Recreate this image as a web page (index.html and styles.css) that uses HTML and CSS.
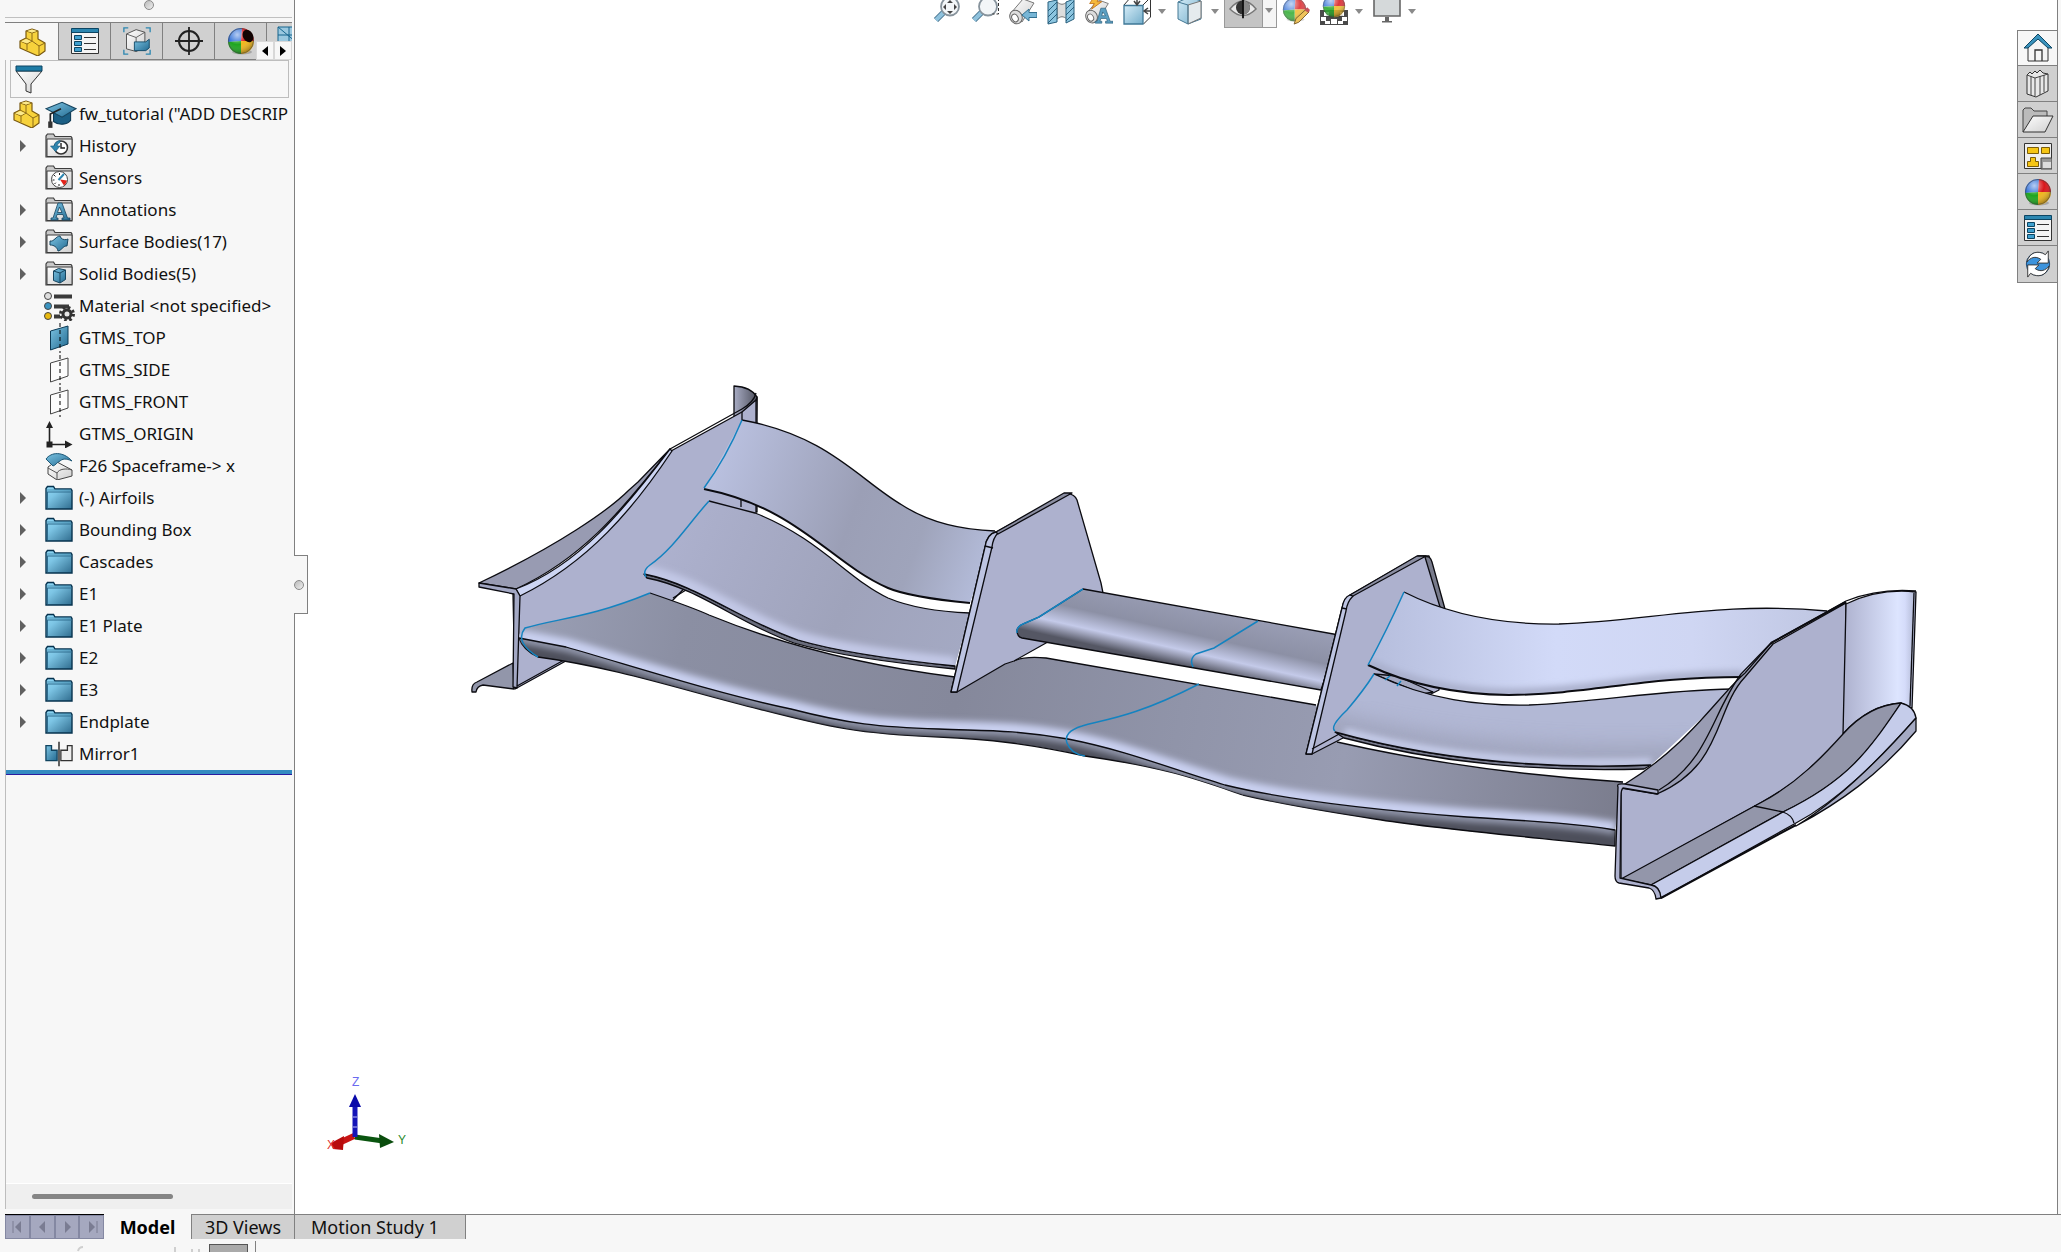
FILE: index.html
```html
<!DOCTYPE html>
<html lang="en">
<head>
<meta charset="utf-8">
<title>fw_tutorial</title>
<link rel="stylesheet" href="styles.css">
</head>
<body>
<svg class="defs" aria-hidden="true">
  <defs>
    <linearGradient id="gFolder" x1="0" y1="0" x2="1" y2="1"><stop offset="0" stop-color="#93dbf8"/><stop offset=".35" stop-color="#7cc4e4"/><stop offset="1" stop-color="#2f6c8e"/></linearGradient>
    <linearGradient id="gBlue" x1="0" y1="0" x2="1" y2="1"><stop offset="0" stop-color="#7cc3e2"/><stop offset="1" stop-color="#236b92"/></linearGradient>
    <linearGradient id="gGrey" x1="0" y1="0" x2="1" y2="1"><stop offset="0" stop-color="#fff"/><stop offset="1" stop-color="#cfcfcf"/></linearGradient>
    <linearGradient id="gLight" x1="0" y1="0" x2="1" y2="1"><stop offset="0" stop-color="#d6edf8"/><stop offset="1" stop-color="#74aecb"/></linearGradient>
    <radialGradient id="gGloss" cx=".35" cy=".25" r=".8"><stop offset="0" stop-color="#fff" stop-opacity=".65"/><stop offset=".5" stop-color="#fff" stop-opacity="0"/><stop offset="1" stop-color="#000" stop-opacity=".35"/></radialGradient>
    <symbol id="part" viewBox="0 0 28 28"><path d="M2 13l6-3V3l6-2 6 2v8l7 4v8l-7 5L2 20z" fill="#f7d23c" stroke="#7a5a12" stroke-width="1.200" stroke-linejoin="round"/><path d="M8 3l6 2 6-2M14 5v8l-6-3M14 13l-5 3-7-3M9 16v6M14 13l7 5 6-3M21 18v9" fill="none" stroke="#8b6a18"/><path d="M3 13.500l5-2.500 5 2.200-4 2zM9 3l5-1.500L19 3 14 4.500z" fill="#fbe98d"/></symbol>
    <symbol id="ball" viewBox="0 0 28 28"><ellipse cx="15" cy="25" rx="10" ry="2.500" fill="#000" opacity=".2"/><path d="M14 14L1 15A13 13 0 0 1 15 1z" fill="#2f6fd8"/><path d="M14 14L15 1A13 13 0 0 1 27 14z" fill="#d8171c"/><path d="M14 14L27 14A13 13 0 0 1 14 27z" fill="#efb61c"/><path d="M14 14L14 27A13 13 0 0 1 1 15z" fill="#1ea51f"/><circle cx="14" cy="14" r="12.500" fill="url(#gGloss)" stroke="#444" stroke-width=".6"/></symbol>
    <symbol id="fold" viewBox="0 0 28 28"><path d="M1 25V4.500L2.500 2.500h6L10 5h16l1 1.500V25z" fill="url(#gFolder)" stroke="#07334f" stroke-width="1.400"/><path d="M2 8h25M2.500 8v16" stroke="#2f6c8e" fill="none"/><path d="M2 6h24" stroke="#4a93b5"/></symbol>
    <symbol id="gfold" viewBox="0 0 28 28"><path d="M1 25V4l1.500-2h6L10 4.500h16L27 6v19z" fill="#c9c9c9" stroke="#3d3d3d" stroke-width="1.200"/><path d="M2 7h25v17.500H2z" fill="url(#gGrey)" stroke="#3d3d3d"/></symbol>
    <symbol id="history" viewBox="0 0 28 28"><use href="#gfold"/><circle cx="16" cy="15.500" r="6.500" fill="#fff" stroke="#333" stroke-width="1.600"/><path d="M16 11v5h4" stroke="#222" fill="none" stroke-width="1.400"/><path d="M15 8.500A7 7 0 0 0 9 14H5.500l5 5.500 4.500-5.500h-3a5 5 0 0 1 3-3.500z" fill="#2e86b0" stroke="#15567a" stroke-width=".6"/></symbol>
    <symbol id="sensor" viewBox="0 0 28 28"><use href="#gfold"/><circle cx="14.500" cy="15.500" r="8" fill="#fff" stroke="#444"/><path d="M14.500 9v2M9 11l1.500 1.500M7.500 16h2M9.500 20l1.300-1.300M14 22v-2" stroke="#222"/><path d="M15 15.500l7 1a7.500 7.500 0 0 1-3 5z" fill="#e2231a"/><path d="M13.500 16l5.500-6" stroke="#2e86b0" stroke-width="2"/></symbol>
    <symbol id="annot" viewBox="0 0 28 28"><use href="#gfold"/><path d="M13 7h4l5.500 15H25v2h-8v-2h2l-1-3.500h-6L11 22h2v2H6v-2h2zM14.500 11l-2 5.500h4.500z" fill="url(#gBlue)" stroke="#17455f" fill-rule="evenodd" stroke-width=".8"/></symbol>
    <symbol id="surf" viewBox="0 0 28 28"><use href="#gfold"/><path d="M5 13c4 1 6-5 10-5l1 2c2 2 5 2 7 1l-1 7c-3-1-6 5-9 5-1-4-4-6-8-6z" fill="url(#gBlue)" stroke="#17455f"/></symbol>
    <symbol id="solid" viewBox="0 0 28 28"><use href="#gfold"/><path d="M8.500 11l5-2.500 7 1.500v9.500L15 23l-6.500-2.500z" fill="url(#gBlue)" stroke="#17455f"/><path d="M8.500 11l6.500 2 5.500-3M15 13v10" fill="none" stroke="#17455f"/></symbol>
    <symbol id="material" viewBox="0 0 30 30"><g stroke="#444"><circle cx="4" cy="5" r="3.500" fill="#ddd"/><circle cx="4" cy="15" r="3.500" fill="#3a93c0"/><circle cx="4" cy="25" r="3.500" fill="#e8b90f"/></g><path d="M10 3.500h18v4H10zM10 13.500h15v4H10zM10 23.500h6v4h-6z" fill="#3a3a3a"/><circle cx="23" cy="23" r="6.500" stroke="#333" stroke-width="3" stroke-dasharray="2.600 2.500" fill="none"/><circle cx="23" cy="23" r="4" fill="#e8e8e8" stroke="#333" stroke-width="3"/></symbol>
    <symbol id="planeOn" viewBox="0 0 28 32"><path d="M5.500 9L23 4v18L5.500 28z" fill="url(#gBlue)" stroke="#0c3a55"/><path d="M15 1v30" stroke="#000" stroke-dasharray="4 3"/></symbol>
    <symbol id="plane" viewBox="0 0 28 32"><path d="M5.500 9L23 4v18L5.500 28z" fill="#fcfcfc" stroke="#444"/><path d="M15 1v30" stroke="#000" stroke-dasharray="4 3"/></symbol>
    <symbol id="origin" viewBox="0 0 28 28"><path d="M4.500 24V5M4 24.500h19" stroke="#222" stroke-width="1.600"/><path d="M1 8l3.500-7L8 8zM20 20.500l7.500 4-7.500 4zM1.500 21.500h6v6h-6z" fill="#222"/></symbol>
    <symbol id="ref" viewBox="0 0 28 28"><path d="M3 15c3-2 5-4 9-5l15 8v6l-15 4-9-6z" fill="url(#gGrey)" stroke="#444"/><path d="M3 16l9 5c2-4 9-5 15-3M12 21v7" stroke="#555" fill="none"/><path d="M1 7c5-7 17-8 26 2-6-3-10-2-12 0-4 2-4 4-7 5z" fill="url(#gBlue)" stroke="#1c5675"/></symbol>
    <symbol id="mirror" viewBox="0 0 30 28"><path d="M1 5h6v5h6v11H1z" fill="url(#gBlue)" stroke="#10435f" stroke-width="1.400"/><path d="M29 5h-5v5h-7v11h12z" fill="#eee" stroke="#333" stroke-width="1.400"/><path d="M15 1v26" stroke="#000" stroke-width="1.300"/></symbol>
    <symbol id="hat" viewBox="0 0 30 26"><path d="M8 12v8c5 4 13 3 16-1v-8z" fill="#1b5f85" stroke="#0d3a55"/><path d="M1 8l15-6 13 6-13 8z" fill="url(#gBlue)" stroke="#17455f"/><path d="M15 8L5 13v8" fill="none" stroke="#222" stroke-width="1.600"/><path d="M3 20h4v6H3z" fill="#333"/></symbol>
    <symbol id="funnel" viewBox="0 0 28 30"><path d="M1 7l10 13v7l5 2V20L27 7z" fill="url(#gGrey)" stroke="#333"/><path d="M1 2h26v5H1z" fill="#1e7ca6" stroke="#0d4562"/></symbol>
    <symbol id="props" viewBox="0 0 28 28"><path d="M.500 2.500h27v24H.500z" fill="#f4f4f4" stroke="#333"/><path d="M.500 1.500h27v4H.500z" fill="#2b86b0" stroke="#0d4562"/><path d="M3.500 8.500h7v4h-7zM3.500 14.500h7v4h-7zM3.500 20.500h7v4h-7z" fill="#3fa0cf" stroke="#0d4562"/><path d="M13 10.500h12M13 16.500h12M13 22.500h12" stroke="#333"/></symbol>
    <symbol id="config" viewBox="0 0 32 32"><path d="M1 6V1h5M26 1h5v5M31 26v5h-5M6 31H1v-5" fill="none" stroke="#2b86b0" stroke-width="1.500"/><path d="M4 8l11-5 10 3v17l-10 5-11-3z" fill="url(#gGrey)" stroke="#444"/><path d="M4 8l11 4 10-6M15 12v16" fill="none" stroke="#555"/><path d="M13 17h13l4-3v10l-4 3H13z" fill="url(#gBlue)" stroke="#0d4562"/></symbol>
    <symbol id="target" viewBox="0 0 28 28"><circle cx="14" cy="14" r="10" fill="none" stroke="#222" stroke-width="2"/><path d="M14 0v28M0 14h28" stroke="#222" stroke-width="1.800"/></symbol>
    <symbol id="ballHole" viewBox="0 0 28 28"><use href="#ball"/><ellipse cx="21" cy="9" rx="5" ry="6.500" transform="rotate(-30 21 9)" fill="#120404"/></symbol>
    <symbol id="fitGlass" viewBox="0 0 28 28"><path d="M11 15l-8 8" stroke="#426f8b" stroke-width="6"/><path d="M11 15l-8 8" stroke="#8fc2dd" stroke-width="4"/><circle cx="17" cy="9.500" r="9" fill="#f3f6f8" stroke="#87939c" stroke-width="1.800"/></symbol>
    <symbol id="zoomfit" viewBox="0 0 28 28"><use href="#fitGlass"/><path d="M17 3l3 3h-6zM17 17l3-3h-6zM10 10l3-3v6zM24 10l-3-3v6z" fill="#444"/></symbol>
    <symbol id="zoomarea" viewBox="0 0 28 28"><use href="#fitGlass"/><path d="M27.500 1v16h-6" fill="none" stroke="#333" stroke-dasharray="3 2"/></symbol>
    <symbol id="scope" viewBox="0 0 28 28"><path d="M2 16L14 2l11 4L13 25z" fill="url(#gGrey)" stroke="#777"/><ellipse cx="7" cy="20" rx="6" ry="7" transform="rotate(-30 7 20)" fill="#ddd" stroke="#666"/><ellipse cx="6" cy="21" rx="3" ry="4" transform="rotate(-30 6 21)" fill="#fff" stroke="#666"/></symbol>
    <symbol id="prev" viewBox="0 0 28 28"><use href="#scope"/><path d="M13 18l7-6v3.500h8v5h-8V24z" fill="#78b6d6" stroke="#34708f"/></symbol>
    <symbol id="section" viewBox="0 0 28 28"><path d="M10 5c4 3 6 3 10 0v17c-4-3-6-3-10 0z" fill="#ddd" stroke="#777"/><path d="M1 5l9-2v22l-9 2zM19 5l8-3v20l-8 4z" fill="#8cc5e0" stroke="#285f7d"/><path d="M1 14l9-9M1 20l9-9M1 26l9-9M19 12l8-8M19 18l8-8M19 24l8-8" stroke="#285f7d"/></symbol>
    <symbol id="anim" viewBox="0 0 30 28"><use href="#scope" width="28" height="28"/><path d="M9 0h6l-2 4h5L7 12l3-6H5z" fill="#f5b83b" stroke="#c27622"/><path d="M17 11h5l5 14h3v2h-8v-2h2l-1-3h-6l-1 3h2v2h-7v-2h2zM19 15l-1 4h4z" fill="#5b9fc2" stroke="#2b5d79" fill-rule="evenodd" stroke-width=".7"/></symbol>
    <symbol id="orient" viewBox="0 0 28 28"><path d="M20 8l7-7M1 8l7-8M27.500 0v20l-7 7" fill="none" stroke="#333"/><path d="M1 8.500h19v18.500H1z" fill="url(#gLight)" stroke="#3f7897" stroke-width="1.300"/><path d="M14 2v6M11 4l3 4 3-4M28 14h-6M25 11l-4 3 4 3" fill="none" stroke="#444" stroke-width="1.500"/></symbol>
    <symbol id="display" viewBox="0 0 28 28"><path d="M2 5l12-5 11 4v18l-13 5-10-5z" fill="url(#gLight)" stroke="#447894"/><path d="M12 8l13-4v17l-13 6z" fill="#e5ebee" stroke="#777"/><path d="M2 5l10 3v19" fill="none" stroke="#447894"/></symbol>
    <symbol id="eye" viewBox="0 0 30 28"><path d="M1 15Q15-2 29 15Q15 29 1 15z" fill="#e9e9e9" stroke="#777" stroke-width="1.500"/><circle cx="15" cy="13.500" r="7.500" fill="#333"/><path d="M15 6a7.500 7.500 0 0 1 0 15z" fill="#888"/><path d="M15 2v23" stroke="#111" stroke-width="2"/></symbol>
    <symbol id="appear" viewBox="0 0 30 30"><use href="#ball" width="27" height="27" opacity=".8"/><path d="M13 29l2-6 11-10 3 3-11 11z" fill="#eec35b" stroke="#785c28"/><path d="M24 14l3-3 3 3-2 3z" fill="#c5535b"/></symbol>
    <symbol id="scene" viewBox="0 0 28 28"><path d="M0 13h28v15H0z" fill="#4a4a4a"/><path d="M4 15h5v4H4zM20 15h4v4h-4zM1 20h5v4H1zM11 22h6v5h-6zM22 20h5v4h-5zM5 24h5v3H5zM18 24h5v3h-5z" fill="#fff"/><use href="#ball" x="2" y="-3" width="24" height="24" opacity=".85"/></symbol>
    <symbol id="screen" viewBox="0 0 28 28"><path d="M1 1h26v18H1z" fill="#d5d9da" stroke="#666" stroke-width="1.600"/><path d="M12 20h4v4h3v1.500H9V24h3z" fill="#666"/></symbol>
    <symbol id="home" viewBox="0 0 28 28"><path d="M4 13L14 4l10 9v14H4z" fill="#f5f5f5" stroke="#333"/><path d="M11 27V16h7v11" fill="none" stroke="#333" stroke-width="1.300"/><path d="M0 14L14 0l14 14h-4L14 5 4 14z" fill="#3a93bd" stroke="#0d4562"/></symbol>
    <symbol id="books" viewBox="0 0 28 28"><path d="M3 5l3-3 2 2 3-3 2 2 3-3 3 3 5 1v17l-12 6-9-3z" fill="#e8e8e8" stroke="#333"/><path d="M3 5l8 3 13-4M11 8v18M16 6v19M20 5v17M7 6v19" fill="none" stroke="#444"/></symbol>
    <symbol id="open" viewBox="0 0 32 28"><path d="M1 26V4l2-2h6l3 3h13v6" fill="#bbb" stroke="#444"/><path d="M1 26L11 10h20l-8 16z" fill="url(#gGrey)" stroke="#333"/></symbol>
    <symbol id="palette" viewBox="0 0 28 28"><path d="M.500 1.500h27v25H.500z" fill="#eee" stroke="#333"/><path d="M3.500 5.500h11v6h-11zM17.500 5.500h8v6h-8zM6.500 15.500h5v4h3v5h-11v-5h3z" fill="#f5c514" stroke="#7b5d08"/><path d="M17 16h11v11H17z" fill="#999" stroke="#444"/><path d="M19 20h8v6h-8z" fill="#ddd"/></symbol>
    <symbol id="refresh" viewBox="0 0 28 30"><circle cx="14" cy="15" r="12.500" fill="#3c93dc" stroke="#1c4672"/><path d="M2 13C5 2 14 0 22 5l3-4v13H13l4-4C11 6 6 8 2 13zM26 17C23 28 14 30 6 25l-3 4V16h12l-4 4c6 4 11 2 15-3z" fill="#fff" stroke="#333"/></symbol>
  </defs>
</svg>

<main class="workspace">
  <aside class="panel">
    <div class="grip"><span class="dot"></span></div>
    <nav class="ptabs">
      <button class="ptab on" aria-label="Feature tree"><svg><use href="#part"/></svg></button>
      <button class="ptab" aria-label="Properties"><svg><use href="#props"/></svg></button>
      <button class="ptab" aria-label="Configurations"><svg class="wide"><use href="#config"/></svg></button>
      <button class="ptab" aria-label="Dimensions"><svg><use href="#target"/></svg></button>
      <button class="ptab" aria-label="Appearances"><svg><use href="#ballHole"/></svg></button>
      <button class="ptab last" aria-label="CAM"><svg class="cam" viewBox="0 0 18 18"><path d="M1 1h20v15H1zM1 1l18 15M12 1v14M1 9h16" fill="#9bc8df" stroke="#17658d"/></svg></button>
      <div class="scroller"><button aria-label="Previous tabs"><svg viewBox="0 0 6 10"><path d="M6 0v10L0 5z"/></svg></button><button aria-label="More tabs"><svg viewBox="0 0 6 10"><path d="M0 0v10l6-5z"/></svg></button></div>
    </nav>
    <div class="body">
      <label class="filter"><svg><use href="#funnel"/></svg><input type="text" aria-label="Filter tree"></label>
      <ul class="tree">
        <li class="root"><svg><use href="#part"/></svg><svg class="wide"><use href="#hat"/></svg><span>fw_tutorial ("ADD DESCRIP</span></li>
        <li><i class="tw"></i><svg><use href="#history"/></svg><span>History</span></li>
        <li><i></i><svg><use href="#sensor"/></svg><span>Sensors</span></li>
        <li><i class="tw"></i><svg><use href="#annot"/></svg><span>Annotations</span></li>
        <li><i class="tw"></i><svg><use href="#surf"/></svg><span>Surface Bodies(17)</span></li>
        <li><i class="tw"></i><svg><use href="#solid"/></svg><span>Solid Bodies(5)</span></li>
        <li><i></i><svg class="mat"><use href="#material"/></svg><span>Material &lt;not specified&gt;</span></li>
        <li><i></i><svg class="tall"><use href="#planeOn"/></svg><span>GTMS_TOP</span></li>
        <li><i></i><svg class="tall"><use href="#plane"/></svg><span>GTMS_SIDE</span></li>
        <li><i></i><svg class="tall"><use href="#plane"/></svg><span>GTMS_FRONT</span></li>
        <li><i></i><svg><use href="#origin"/></svg><span>GTMS_ORIGIN</span></li>
        <li><i></i><svg><use href="#ref"/></svg><span>F26 Spaceframe-&gt; x</span></li>
        <li><i class="tw"></i><svg><use href="#fold"/></svg><span>(-) Airfoils</span></li>
        <li><i class="tw"></i><svg><use href="#fold"/></svg><span>Bounding Box</span></li>
        <li><i class="tw"></i><svg><use href="#fold"/></svg><span>Cascades</span></li>
        <li><i class="tw"></i><svg><use href="#fold"/></svg><span>E1</span></li>
        <li><i class="tw"></i><svg><use href="#fold"/></svg><span>E1 Plate</span></li>
        <li><i class="tw"></i><svg><use href="#fold"/></svg><span>E2</span></li>
        <li><i class="tw"></i><svg><use href="#fold"/></svg><span>E3</span></li>
        <li><i class="tw"></i><svg><use href="#fold"/></svg><span>Endplate</span></li>
        <li><i></i><svg><use href="#mirror"/></svg><span>Mirror1</span></li>
      </ul>
      <div class="rollback"></div>
      <div class="hscroll"><div class="thumb"></div></div>
    </div>
    <button class="splitter" aria-label="Collapse panel"><span class="dot"></span></button>
  </aside>

  <section class="view">
    <div class="hud">
      <button aria-label="Zoom to fit"><svg><use href="#zoomfit"/></svg></button>
      <button aria-label="Zoom to area"><svg><use href="#zoomarea"/></svg></button>
      <button aria-label="Previous view"><svg><use href="#prev"/></svg></button>
      <button aria-label="Section view"><svg><use href="#section"/></svg></button>
      <button aria-label="Dynamic annotation views"><svg><use href="#anim"/></svg></button>
      <button class="drop" aria-label="View orientation"><svg><use href="#orient"/></svg><i class="caret"></i></button>
      <button class="drop" aria-label="Display style"><svg><use href="#display"/></svg><i class="caret"></i></button>
      <button class="eye" aria-label="Hide or show items"><svg><use href="#eye"/></svg><span><i class="caret"></i></span></button>
      <button aria-label="Edit appearance"><svg><use href="#appear"/></svg></button>
      <button class="drop" aria-label="Apply scene"><svg><use href="#scene"/></svg><i class="caret"></i></button>
      <button class="drop" aria-label="View settings"><svg><use href="#screen"/></svg><i class="caret"></i></button>
    </div>

    <svg class="model" viewBox="296 0 1762 1214" role="img" aria-label="Front wing model">
      <defs>
        <filter id="soft" x="-20%" y="-50%" width="140%" height="200%"><feGaussianBlur stdDeviation="10"/></filter>
        <filter id="soft2" x="-20%" y="-20%" width="140%" height="140%"><feGaussianBlur stdDeviation="3"/></filter>
        <linearGradient id="w3l" gradientUnits="userSpaceOnUse" x1="720" y1="460" x2="990" y2="560"><stop offset="0" stop-color="#b9c0df"/><stop offset=".5" stop-color="#9b9fb6"/><stop offset=".75" stop-color="#9fa4bb"/><stop offset="1" stop-color="#b4bcda"/></linearGradient>
        <linearGradient id="w2l" gradientUnits="userSpaceOnUse" x1="670" y1="530" x2="960" y2="660"><stop offset="0" stop-color="#adb1ce"/><stop offset=".6" stop-color="#9fa3bb"/><stop offset="1" stop-color="#a4a9c3"/></linearGradient>
        <linearGradient id="w1" gradientUnits="userSpaceOnUse" x1="520" y1="600" x2="1620" y2="810"><stop offset="0" stop-color="#9ba0b6"/><stop offset=".15" stop-color="#8b8fa3"/><stop offset=".4" stop-color="#85889b"/><stop offset=".6" stop-color="#9094a9"/><stop offset=".75" stop-color="#989cb2"/><stop offset="1" stop-color="#7b7d8e"/></linearGradient>
        <linearGradient id="w3r" gradientUnits="userSpaceOnUse" x1="1375" y1="640" x2="1830" y2="640"><stop offset="0" stop-color="#b6bedd"/><stop offset=".4" stop-color="#d2daf8"/><stop offset=".7" stop-color="#cfd6f3"/><stop offset="1" stop-color="#bfc6e2"/></linearGradient>
        <linearGradient id="mid" gradientUnits="userSpaceOnUse" x1="1195" y1="607" x2="1182" y2="665"><stop offset="0" stop-color="#989cb3"/><stop offset=".45" stop-color="#8c90a5"/><stop offset=".75" stop-color="#c4cae9"/><stop offset=".85" stop-color="#9a9eb5"/><stop offset="1" stop-color="#555764"/></linearGradient>
        <linearGradient id="tailr" x1="0" x2="1"><stop offset="0" stop-color="#adb1ce"/><stop offset=".75" stop-color="#dde5ff"/><stop offset=".85" stop-color="#d5dcfa"/><stop offset="1" stop-color="#aeb5d0"/></linearGradient>
        <linearGradient id="taill" x1="0" x2="1"><stop offset="0" stop-color="#a8acc4"/><stop offset="1" stop-color="#50525f"/></linearGradient>
        <path id="lead" d="M520 638L567 647C640 668 720 694 792 709C850 724 880 727 940 729C980 731 1011 729 1069 739C1130 751 1172 769 1226 785C1279 798 1350 808 1468 817C1550 822 1580 824 1616 830"/>
        <path id="under" d="M520 638L567 647C640 668 720 694 792 709C850 724 880 727 940 729C980 731 1011 729 1069 739C1130 751 1172 769 1226 785C1279 798 1350 808 1468 817C1550 822 1580 824 1616 830V846C1500 834 1430 828 1376 819Q1290 806 1244 795C1200 780 1170 768 1086 756C1030 744 990 739 940 737C860 734 830 727 760 709C690 692 620 668 539 657Q524 650 520 638Z"/>
        <clipPath id="cu"><use href="#under"/></clipPath>
        <clipPath id="c1"><path d="M651 593Q695 608 710 615Q820 660 956 677L1015 661Q1025 656 1047 658L1317 705L1338 742Q1470 772 1624 782L1616 830C1580 824 1550 822 1468 817C1350 808 1279 798 1226 785C1172 769 1130 751 1069 739C1011 729 980 731 940 729C880 727 850 724 792 709C720 694 640 668 567 647L520 638Q520 631 526 628C560 618 590 618 651 593Z"/></clipPath>
        <clipPath id="c3r"><path d="M1405 592Q1470 625 1560 624C1650 621 1720 601 1828 611L1772 643L1744 677C1640 677 1595 694 1510 695Q1430 694 1369 665Q1388 630 1405 592Z"/></clipPath>
        <clipPath id="c2r"><path d="M1375 674C1430 700 1480 706 1530 705C1600 702 1660 690 1734 689L1652 765Q1480 772 1336 732Q1332 728 1348 710Q1365 690 1375 674Z"/></clipPath>
        <clipPath id="c2l"><path d="M710 501L756 513C820 538 850 580 889 598Q920 611 971 613L956 666Q850 655 799 640C740 620 700 585 645 574Q643 570 651 565C675 548 690 523 710 501Z"/></clipPath>
      </defs>

      <g class="ink">
        <path d="M735 386Q752 387 758 397L757 440L735 425Z" fill="url(#taill)"/>
        <path d="M758 397V512L743 505V412Q757 405 758 397Z" fill="#9a9eb6"/>
        <path d="M480 583C560 545 610 510 630 490L639 482L671 449C620 515 580 560 517 589L480 583Z" fill="#989bb2"/>
        <path d="M514 663L478 682Q472 684 473 692H477Q478 686 484 685L515 689Z" fill="#9296aa"/>
        <path d="M519 594C590 560 630 505 672 451L743 412L757 400V515L674 600L565 662L516 689L514 594Z" fill="#adb1ce"/>
        <path d="M517 589C580 565 625 510 671 449L673 451C635 508 590 562 521 596Z" fill="#cdd5f3"/>
        <path d="M480 583L517 589L521 596L518 688L514 687L515 594L480 587Z" fill="#a3a8c4"/>
        <path d="M671 449L743 409Q755 402 757 393" fill="none"/>
        <path d="M518 686L565 660M674 598L687 590M742 500V507" fill="none"/>
      </g>

      <g class="ink">
        <use href="#under" fill="#4d4f5b"/>
        <g clip-path="url(#cu)"><use href="#lead" fill="none" stroke="#9297ac" stroke-width="10" filter="url(#soft2)"/></g>
        <g clip-path="url(#c1)">
          <path d="M500 580H1640V850H500Z" fill="url(#w1)" stroke="none"/>
          <use href="#lead" fill="none" stroke="#c9d0f0" stroke-width="17" filter="url(#soft2)"/>
        </g>
        <use href="#lead" fill="none"/>
        <path d="M651 593Q695 608 710 615Q820 660 956 677M1015 661Q1025 656 1047 658L1317 705M1338 742Q1470 772 1624 782" fill="none"/>
      </g>

      <g class="ink">
        <path d="M645 574C700 585 740 620 799 640Q850 655 956 666V669Q850 659 795 643C740 624 700 588 648 578Z" fill="#696c7c"/>
        <g clip-path="url(#c2l)"><path d="M640 495H980V675H640Z" fill="url(#w2l)" stroke="none"/><path d="M645 572C700 583 740 618 799 638Q850 653 956 664" fill="none" stroke="#c2c8e6" stroke-width="14" filter="url(#soft2)"/></g>
        <path d="M710 501L756 513C820 538 850 580 889 598Q920 611 971 613M645 574C700 585 740 620 799 640Q850 655 956 666" fill="none"/>
        <path d="M743 420C830 436 860 480 903 505Q940 529 996 531L971 603Q910 597 889 588C830 562 800 508 705 489Z" fill="url(#w3l)" stroke="none"/>
        <path d="M743 420C830 436 860 480 903 505Q940 529 996 531M743 420V412" fill="none"/>
        <path class="bold" d="M971 603Q910 597 889 588C830 562 800 508 705 489" fill="none"/>
      </g>

      <g class="ink">
        <path d="M997 532L1067 494Q1075 493 1078 500L1102 583L1104 593V620L1047 643L1015 661L1006 664L958 692H952L986 547Q988 534 997 532Z" fill="#adb1ce"/>
        <path d="M952 692L986 547Q988 534 997 532L999 533Q994 538 993 547L958 692Z" fill="#bdc4e2"/>
        <path d="M997 532L1065 493H1073L999 534Z" fill="#8b8ea2"/>
        <path d="M986 546L994 548" fill="none"/>
        <path d="M1084 589L1340 635L1322 690L1023 638Q1018 637 1018 630Q1019 626 1024 624L1040 617Z" fill="url(#mid)"/>
      </g>

      <g class="ink">
        <path d="M1351 595L1419 556L1430 556L1445 608L1440 690L1344 738L1313 754H1307L1343 608Q1345 597 1351 595Z" fill="#adb1ce"/>
        <path d="M1307 754L1343 608Q1345 597 1351 595L1354 596Q1348 602 1347 611L1313 754Z" fill="#bdc4e2"/>
        <path d="M1351 595L1418 556H1427L1354 596Z" fill="#8b8ea2"/>
        <path d="M1426 557Q1431 555 1433 562L1446 609L1441 607Z" fill="#787b8c"/>
        <path d="M1343 608L1348 609M1313 749L1342 733" fill="none"/>
        <path d="M1375 674L1398 676L1434 692L1424 694Z" fill="#a4a8c1"/>
      </g>

      <g class="ink">
        <path d="M1336 732Q1480 772 1652 765L1645 769Q1480 774 1345 738Z" fill="#777a8c"/>
        <g clip-path="url(#c2r)"><path d="M1330 670H1740V775H1330Z" fill="#b2b8d5" stroke="none"/><path d="M1300 722Q1480 772 1700 762" fill="none" stroke="#9599af" stroke-width="36" opacity=".6" filter="url(#soft)"/><path d="M1346 732Q1480 768 1652 762" fill="none" stroke="#cad1ef" stroke-width="7" filter="url(#soft2)"/></g>
        <path d="M1375 674C1430 700 1480 706 1530 705C1600 702 1660 690 1734 689M1336 732Q1480 772 1652 765" fill="none"/>
        <g clip-path="url(#c3r)"><path d="M1360 585H1840V700H1360Z" fill="url(#w3r)" stroke="none"/><path d="M1744 675C1640 675 1595 692 1510 693Q1430 692 1369 663" fill="none" stroke="#a9afcb" stroke-width="9" filter="url(#soft2)"/></g>
        <path d="M1405 592Q1470 625 1560 624C1650 621 1720 601 1828 611" fill="none"/>
        <path class="bold" d="M1744 677C1640 677 1595 694 1510 695Q1430 694 1369 665" fill="none"/>
      </g>

      <g class="ink">
        <path d="M1626 784C1690 745 1720 695 1746 673L1772 643L1776 646C1735 700 1730 760 1660 794Z" fill="#999cb3"/>
        <path d="M1774 644L1847 603V735L1814 765Q1795 785 1763 802L1622 880V788L1658 794C1725 765 1715 710 1746 677Z" fill="#adb1ce"/>
        <path d="M1847 604Q1880 588 1917 592L1913 708L1902 703Q1870 705 1844 734Z" fill="url(#tailr)"/>
        <path d="M1915 593L1911 706" fill="none"/>
        <path d="M1622 879L1763 802C1800 782 1825 755 1844 734Q1870 705 1902 703C1870 755 1840 785 1784 812L1652 885Z" fill="#9396aa"/>
        <path d="M1784 812C1850 780 1870 750 1902 703Q1915 706 1917 718C1880 760 1840 800 1797 823L1662 898Q1660 886 1652 885Z" fill="#c5ccea"/>
        <path d="M1917 718V731C1880 775 1840 803 1797 826C1840 800 1880 760 1917 718Z" fill="#a5aac3"/>
        <path d="M1755 806L1784 812Q1793 815 1795 823" fill="none"/>
        <path d="M1619 787Q1617 783 1626 784L1659 790V794L1624 788Q1622 790 1622 796L1621 878L1652 885Q1661 886 1662 898L1657 899Q1656 890 1650 888L1620 883Q1616 882 1616 876Z" fill="#adb1ce"/>
        <path d="M1660 790C1710 760 1712 715 1742 674L1772 643L1847 601Q1880 588 1917 591" fill="none"/>
        <path class="bold" d="M1772 643L1847 602M1662 898L1797 825" fill="none"/>
      </g>

      <g class="edge">
        <path d="M743 420Q727 458 705 488M710 501C690 523 675 548 651 565Q643 571 647 577M651 593C590 618 560 618 526 628Q515 642 539 657"/>
        <path d="M1200 684C1130 720 1100 720 1083 726Q1064 732 1068 743Q1072 754 1086 756M1084 589L1040 617L1024 624Q1017 627 1018 633M1259 621L1215 648L1197 654Q1190 659 1194 667"/>
        <path d="M1405 592Q1388 630 1369 665M1375 674Q1365 690 1348 710Q1330 727 1336 731M1386 680L1391 676M1398 686L1402 681"/>
      </g>

      <g class="triad">
        <path d="M355 1136L340 1143" stroke="#c81414" stroke-width="6"/><path d="M345 1136l-13 7 2 6 10 1z" fill="#b80c0c"/>
        <path d="M356 1137l28 4" stroke="#0a550f" stroke-width="5"/><path d="M380 1134l15 8-14 6z" fill="#0a4d0d"/>
        <path d="M356 1137v-34" stroke="#1414b8" stroke-width="5"/><path d="M350 1107l6-13 6 13z" fill="#0909aa"/><path d="M354 1117h4M354 1127h4" stroke="#b9b9f5"/>
        <text x="353" y="1086" fill="#6a6af0">Z</text><text x="399" y="1144" fill="#2a8a2a">Y</text><text x="328" y="1149" fill="#e03030">X</text>
      </g>
    </svg>

    <nav class="taskpane">
      <button class="on" aria-label="Home"><svg><use href="#home"/></svg></button>
      <button aria-label="Design library"><svg><use href="#books"/></svg></button>
      <button aria-label="File explorer"><svg class="wide"><use href="#open"/></svg></button>
      <button aria-label="View palette"><svg><use href="#palette"/></svg></button>
      <button aria-label="Appearances"><svg><use href="#ball"/></svg></button>
      <button aria-label="Custom properties"><svg><use href="#props"/></svg></button>
      <button aria-label="Updates"><svg><use href="#refresh"/></svg></button>
    </nav>
  </section>
</main>

<footer class="foot">
  <div class="sheets">
    <div class="nav">
      <button aria-label="First"><svg viewBox="0 0 12 14"><path d="M2 1v12" /><path class="f" d="M10 1v12L4 7z"/></svg></button>
      <button aria-label="Previous"><svg viewBox="0 0 12 14"><path class="f" d="M9 1v12L3 7z"/></svg></button>
      <button aria-label="Next"><svg viewBox="0 0 12 14"><path class="f" d="M4 1v12l6-6z"/></svg></button>
      <button aria-label="Last"><svg viewBox="0 0 12 14"><path d="M11 1v12"/><path class="f" d="M3 1v12l6-6z"/></svg></button>
    </div>
    <button class="sheet on">Model</button>
    <button class="sheet views">3D Views</button>
    <button class="sheet motion">Motion Study 1</button>
    <div class="rule"></div>
  </div>
  <div class="status"><svg class="marks" viewBox="0 0 140 13"><path d="M11 12q1-4 5-4M108 8v5M125 10v3M132 10v3" fill="none" stroke="#cfcfcf" stroke-width="2"/></svg><div class="chip"></div><div class="bar"></div></div>
</footer>
</body>
</html>
```

FILE: styles.css
```css
* { box-sizing: border-box; }
body { margin: 0; height: 100vh; display: flex; flex-direction: column; overflow: hidden; background: #f7f7f7; color: #111; font: 18px/32px "Noto Sans", "Open Sans", sans-serif; }
button { margin: 0; padding: 0; border: 0; background: none; font: inherit; color: inherit; }
svg { display: block; width: 28px; height: 28px; flex: none; }
svg.wide { width: 32px; }
svg.defs { position: absolute; width: 0; height: 0; }
.workspace { flex: 1; min-height: 0; display: flex; }

.panel { position: relative; flex: none; width: 295px; padding: 0 2px 0 5px; border-right: 1px solid #808080; display: flex; flex-direction: column; }
.grip { height: 18px; border-bottom: 1px solid #c0c0c0; display: flex; justify-content: center; }
.dot { width: 10px; height: 10px; border-radius: 50%; border: 1px solid #8a8a8a; background: linear-gradient(135deg, #bbb, #eee); }
.ptabs { position: relative; height: 38px; margin-top: 4px; border-top: 1px solid #808080; display: flex; overflow: hidden; }
.ptab { flex: none; width: 52px; height: 37px; border-right: 1px solid #808080; border-bottom: 1px solid #808080; background: #d0d0d0; display: flex; align-items: center; justify-content: center; }
.ptab.on { width: 54px; background: #f7f7f7; border-bottom: 0; }
.ptab.last { border-right: 0; align-items: flex-start; justify-content: flex-start; width: 40px; padding: 3px 0 0 10px; }
.ptab .cam { width: 18px; height: 18px; }
.scroller { position: absolute; right: 0; bottom: 0; display: flex; background: #f7f7f7; }
.scroller button { width: 18px; height: 19px; border: 1px solid #d8d8d8; display: flex; align-items: center; justify-content: center; }
.scroller svg { width: 6px; height: 10px; }
.body { flex: 1; min-height: 0; border-left: 1px solid #bdbdbd; margin-bottom: 5px; display: flex; flex-direction: column; }
.filter { flex: none; height: 38px; margin: 0 3px 0 4px; border: 1px solid #bdbdbd; display: flex; align-items: center; padding-left: 4px; }
.filter svg { height: 30px; }
.filter input { flex: 1; min-width: 0; border: 0; background: none; outline: 0; font: inherit; }
.tree { list-style: none; margin: 0; padding: 0 0 0 6px; flex: none; font-size: 17px; }
.tree li { display: grid; grid-template-columns: 33px 28px 1fr; height: 32px; align-items: center; white-space: nowrap; }
.tree span { padding-left: 6px; }
.tree .tall { height: 32px; }
.tree .mat { width: 32px; height: 30px; margin-left: -2px; }
.tw { width: 0; height: 0; margin-left: 8px; border: 6px solid transparent; border-left-color: #606060; border-right: 0; }
.rollback { height: 5px; flex: none; background: #348bc1; border-bottom: 1px solid #2a1ca0; }
.hscroll { margin-top: auto; height: 26px; border-top: 1px solid #fff; background: #efefef; padding: 10px 0 0 26px; }
.thumb { width: 141px; height: 5px; border-radius: 3px; background: #858585; }
.splitter { position: absolute; left: 294px; top: 555px; width: 14px; height: 59px; border: 1px solid #808080; border-left: 0; background: #f7f7f7; display: flex; align-items: center; z-index: 1; }

.view { position: relative; flex: 1; min-width: 0; background: #fff; border-right: 1px solid #808080; margin-right: 3px; }
.model { width: 100%; height: 100%; }
.ink { stroke: #0b0b10; stroke-width: 1.300; stroke-linejoin: round; }
.bold { stroke-width: 2; }
.edge { fill: none; stroke: #1483c0; stroke-width: 1.500; }
.triad text { font: 12px "Liberation Sans", sans-serif; }
.hud { position: absolute; left: 0; right: 4px; top: -6px; display: flex; justify-content: center; gap: 10px; }
.drop { display: flex; align-items: center; gap: 7px; }
.caret { border: 4px solid transparent; border-top: 5px solid #8a8a8a; border-bottom: 0; }
.eye { display: flex; width: 53px; height: 34px; margin: 0 -5px; border: 1px solid #999; border-top: 0; background: #c4c4c4; padding-left: 4px; gap: 5px; }
.eye span { flex: 1; background: #f5f5f5; border-left: 1px solid #999; display: flex; align-items: center; justify-content: center; }
.taskpane { position: absolute; right: -1px; top: 30px; width: 41px; border: 1px solid #808080; background: #d0d0d0; }
.taskpane button { width: 100%; height: 36px; display: flex; align-items: center; justify-content: center; border-bottom: 1px solid #808080; }
.taskpane .on { background: #f7f7f7; height: 35px; }
.taskpane button:last-child { border-bottom: 0; }

.foot { flex: none; }
.sheets { display: flex; height: 25px; padding-left: 5px; line-height: 22px; }
.nav { display: flex; width: 99px; border-top: 1px solid #000; background: #a5a8bf; }
.nav button { flex: 1; border: 1px solid #8488a2; display: flex; align-items: center; justify-content: center; }
.nav svg { width: 12px; height: 14px; stroke: #7a7c92; }
.nav .f { fill: #7a7c92; stroke: none; }
.sheet { border-top: 1px solid #808080; border-right: 1px solid #808080; background: #d0d0d0; }
.sheet.on { width: 88px; background: #f7f7f7; border-top: 0; font-weight: 700; color: #000; }
.sheet.views { width: 103px; }
.sheet.motion { width: 171px; text-align: left; padding-left: 16px; }
.rule { flex: 1; border-top: 1px solid #808080; }
.status { height: 13px; display: flex; align-items: flex-end; padding-left: 67px; }
.marks { width: 140px; height: 13px; }
.chip { width: 39px; height: 8px; margin-left: 2px; border: 1px solid #555; border-bottom: 0; background: #aaa; }
.bar { width: 8px; height: 11px; border-right: 1px solid #808080; }
```
